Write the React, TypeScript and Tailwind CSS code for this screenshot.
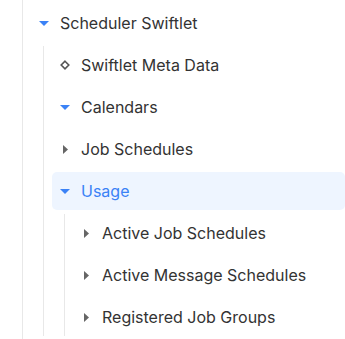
import React from "react";

type Kind = "open" | "closed" | "leaf";

function Icon({ kind }: { kind: Kind }) {
  if (kind === "open")
    return (
      <svg width="10" height="5" viewBox="0 0 10 5">
        <path d="M0 0 L10 0 L5 5 Z" fill="#3b82f6" />
      </svg>
    );
  if (kind === "closed")
    return (
      <svg width="5" height="9" viewBox="0 0 5 9">
        <path d="M0 0 L5 4.5 L0 9 Z" fill="#666" />
      </svg>
    );
  return (
    <svg width="10" height="10" viewBox="0 0 10 10">
      <path d="M5 1.2 L8.8 5 L5 8.8 L1.2 5 Z" fill="none" stroke="#555" strokeWidth="1.6" />
    </svg>
  );
}

function Row({ kind, label, active }: { kind: Kind; label: string; active?: boolean }) {
  return (
    <div
      className={`flex items-center h-[38px] shrink-0 rounded-[5px] ${active ? "bg-[#eef5ff]" : ""}`}
    >
      <div className="w-[26px] flex justify-center items-center">
        <Icon kind={kind} />
      </div>
      <span
        className={`pl-[3px] text-[16px] ${active ? "text-[#3b82f6]" : "text-[#333333]"}`}
      >
        {label}
      </span>
    </div>
  );
}

export default function App() {
  return (
    <div
      className="w-[345px] h-[339px] bg-white overflow-hidden"
      style={{ fontFamily: "Inter, 'Noto Sans', sans-serif" }}
    >
      <div className="ml-[22px] h-full border-l border-[#e8e8e8] pl-[8px] pt-[4px] pb-[4px] flex flex-col gap-[4px]">
        <Row kind="open" label="Scheduler Swiftlet" />
        <div className="ml-[12px] flex-1 border-l border-[#e8e8e8] pl-[8px] flex flex-col gap-[4px]">
          <Row kind="leaf" label="Swiftlet Meta Data" />
          <Row kind="open" label="Calendars" />
          <Row kind="closed" label="Job Schedules" />
          <Row kind="open" label="Usage" active />
          <div className="ml-[12px] flex-1 border-l border-[#e8e8e8] pl-[8px] flex flex-col gap-[4px]">
            <Row kind="closed" label="Active Job Schedules" />
            <Row kind="closed" label="Active Message Schedules" />
            <Row kind="closed" label="Registered Job Groups" />
          </div>
        </div>
      </div>
    </div>
  );
}
